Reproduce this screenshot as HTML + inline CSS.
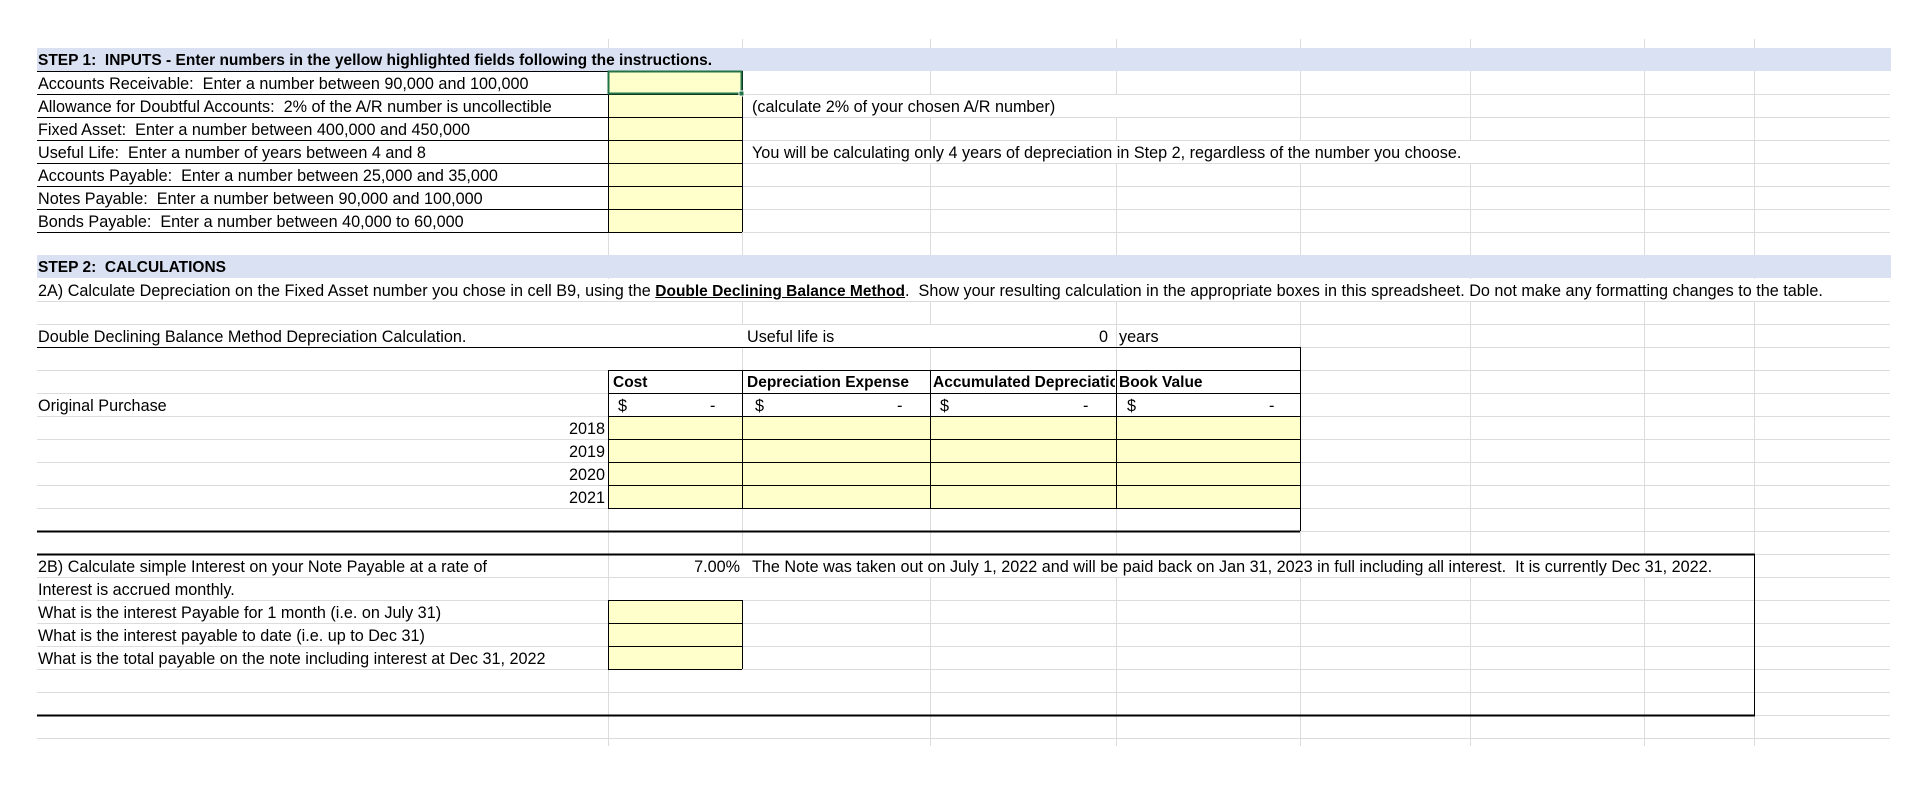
<!DOCTYPE html>
<html><head><meta charset="utf-8"><style>
html,body{margin:0;padding:0;background:#fff;}
body{width:1918px;height:808px;position:relative;overflow:hidden;font-family:"Liberation Sans",Arial,sans-serif;font-size:16.2px;color:#000;}
.t{position:absolute;white-space:nowrap;height:20px;line-height:20px;}
.w{background:#fff;}
.r{text-align:right;}
.b{font-weight:bold;font-size:15.5px;}
b{font-size:15.5px;}
svg{position:absolute;left:0;top:0;}
</style></head><body>
<svg width="1918" height="808" xmlns="http://www.w3.org/2000/svg">
<rect x="37" y="48" width="1854" height="23" fill="#dae1f2"/>
<rect x="37" y="255" width="1854" height="23" fill="#dae1f2"/>
<rect x="608" y="71" width="134" height="161" fill="#ffffcc"/>
<rect x="608" y="416" width="692" height="92" fill="#ffffcc"/>
<rect x="608" y="600" width="134" height="69" fill="#ffffcc"/>
<g stroke="#dcdcdc" stroke-width="1">
<path d="M37 94.5H1890M37 117.5H1890M37 140.5H1890M37 163.5H1890M37 186.5H1890M37 209.5H1890M37 232.5H1890M37 301.5H1890M37 324.5H1890M37 347.5H1890M37 370.5H1890M37 393.5H1890M37 416.5H1890M37 439.5H1890M37 462.5H1890M37 485.5H1890M37 508.5H1890M37 531.5H1890M37 554.5H1890M37 577.5H1890M37 600.5H1890M37 623.5H1890M37 646.5H1890M37 669.5H1890M37 692.5H1890M37 715.5H1890M37 738.5H1890"/>
<path d="M608.5 39V48M742.5 39V48M930.5 39V48M1116.5 39V48M1300.5 39V48M1470.5 39V48M1644.5 39V48M1754.5 39V48"/>
<path d="M742.5 71V255M930.5 71V255M1116.5 71V255M1300.5 71V255M1470.5 71V255M1644.5 71V255M1754.5 71V255"/>
<path d="M608.5 232V255M608.5 278V301M930.5 301V370M1116.5 301V370M742.5 301V370M1300.5 301V531M1470.5 278V746M1644.5 278V746M1754.5 278V746"/>
<path d="M608.5 508V600M608.5 669V746M930.5 508V554M930.5 577V746M1116.5 508V554M1116.5 577V746M1300.5 531V554M1300.5 577V746M742.5 508V554"/>
</g>
<!-- hide gridlines under overflowing text rows -->
<rect x="743" y="95" width="400" height="22" fill="#fff"/>
<rect x="743" y="141" width="730" height="22" fill="#fff"/>
<rect x="38" y="279" width="1852" height="22" fill="#fff"/>
<rect x="743" y="555" width="1011" height="22" fill="#fff"/>
<rect x="38" y="325" width="1062" height="22" fill="#fff"/>
<g stroke="#000" stroke-width="1" fill="none">
<path d="M37 71.5H742M37 94.5H742M37 117.5H742M37 140.5H742M37 163.5H742M37 186.5H742M37 209.5H742M37 232.5H742"/>
<path d="M608.5 71V232M742.5 71V232"/>
<path d="M37 347.5H1300M608 370.5H1300M608 393.5H1300M608 416.5H1300M608 439.5H1300M608 462.5H1300M608 485.5H1300M608 508.5H1300"/>
<path d="M1300.5 347V531M608.5 370V508M742.5 370V508M930.5 370V508M1116.5 370V508"/>
<path d="M37 531.5H1300" stroke-width="2"/>
<path d="M37 554.5H1755M37 715.5H1755" stroke-width="2"/>
<path d="M1754.5 554V716"/>
<path d="M608 600.5H742M608 623.5H742M608 646.5H742M608 669.5H742M608.5 600V669M742.5 600V669"/>
</g>
<rect x="608.5" y="71.5" width="133" height="22" fill="none" stroke="#217346" stroke-width="2"/>
<rect x="739" y="91" width="5" height="5" fill="#217346" stroke="#fff" stroke-width="1"/>
</svg>

<div class="t b" style="left:38px;top:51px">STEP 1:&nbsp; INPUTS - Enter numbers in the yellow highlighted fields following the instructions.</div>
<div class="t" style="left:38px;top:74px">Accounts Receivable:&nbsp; Enter a number between 90,000 and 100,000</div>
<div class="t" style="left:38px;top:97px">Allowance for Doubtful Accounts:&nbsp; 2% of the A/R number is uncollectible</div>
<div class="t" style="left:752px;top:97px">(calculate 2% of your chosen A/R number)</div>
<div class="t" style="left:38px;top:120px">Fixed Asset:&nbsp; Enter a number between 400,000 and 450,000</div>
<div class="t" style="left:38px;top:143px">Useful Life:&nbsp; Enter a number of years between 4 and 8</div>
<div class="t" style="left:752px;top:143px">You will be calculating only 4 years of depreciation in Step 2, regardless of the number you choose.</div>
<div class="t" style="left:38px;top:166px">Accounts Payable:&nbsp; Enter a number between 25,000 and 35,000</div>
<div class="t" style="left:38px;top:189px">Notes Payable:&nbsp; Enter a number between 90,000 and 100,000</div>
<div class="t" style="left:38px;top:212px">Bonds Payable:&nbsp; Enter a number between 40,000 to 60,000</div>

<div class="t b" style="left:38px;top:258px">STEP 2:&nbsp; CALCULATIONS</div>
<div class="t" style="left:38px;top:281px">2A) Calculate Depreciation on the Fixed Asset number you chose in cell B9, using the <b style="text-decoration:underline">Double Declining Balance Method</b>.&nbsp; Show your resulting calculation in the appropriate boxes in this spreadsheet. Do not make any formatting changes to the table.</div>
<div class="t" style="left:38px;top:327px">Double Declining Balance Method Depreciation Calculation.</div>
<div class="t" style="left:747px;top:327px">Useful life is</div>
<div class="t r" style="left:1000px;width:108px;top:327px">0</div>
<div class="t" style="left:1119px;top:327px">years</div>

<div class="t b" style="left:613px;top:373px">Cost</div>
<div class="t b" style="left:747px;top:373px">Depreciation Expense</div>
<div class="t b" style="left:933px;top:373px;width:182px;overflow:hidden">Accumulated Depreciation</div>
<div class="t b" style="left:1119px;top:373px">Book Value</div>
<div class="t" style="left:38px;top:396px">Original Purchase</div>
<div class="t" style="left:618px;top:396px">$</div><div class="t" style="left:710px;top:396px">-</div>
<div class="t" style="left:755px;top:396px">$</div><div class="t" style="left:897px;top:396px">-</div>
<div class="t" style="left:940px;top:396px">$</div><div class="t" style="left:1083px;top:396px">-</div>
<div class="t" style="left:1127px;top:396px">$</div><div class="t" style="left:1269px;top:396px">-</div>
<div class="t r" style="left:500px;width:105px;top:419px">2018</div>
<div class="t r" style="left:500px;width:105px;top:442px">2019</div>
<div class="t r" style="left:500px;width:105px;top:465px">2020</div>
<div class="t r" style="left:500px;width:105px;top:488px">2021</div>

<div class="t" style="left:38px;top:557px">2B) Calculate simple Interest on your Note Payable at a rate of</div>
<div class="t r" style="left:620px;width:120px;top:557px">7.00%</div>
<div class="t" style="left:752px;top:557px">The Note was taken out on July 1, 2022 and will be paid back on Jan 31, 2023 in full including all interest.&nbsp; It is currently Dec 31, 2022.</div>
<div class="t" style="left:38px;top:580px">Interest is accrued monthly.</div>
<div class="t" style="left:38px;top:603px">What is the interest Payable for 1 month (i.e. on July 31)</div>
<div class="t" style="left:38px;top:626px">What is the interest payable to date (i.e. up to Dec 31)</div>
<div class="t" style="left:38px;top:649px">What is the total payable on the note including interest at Dec 31, 2022</div>
</body></html>
